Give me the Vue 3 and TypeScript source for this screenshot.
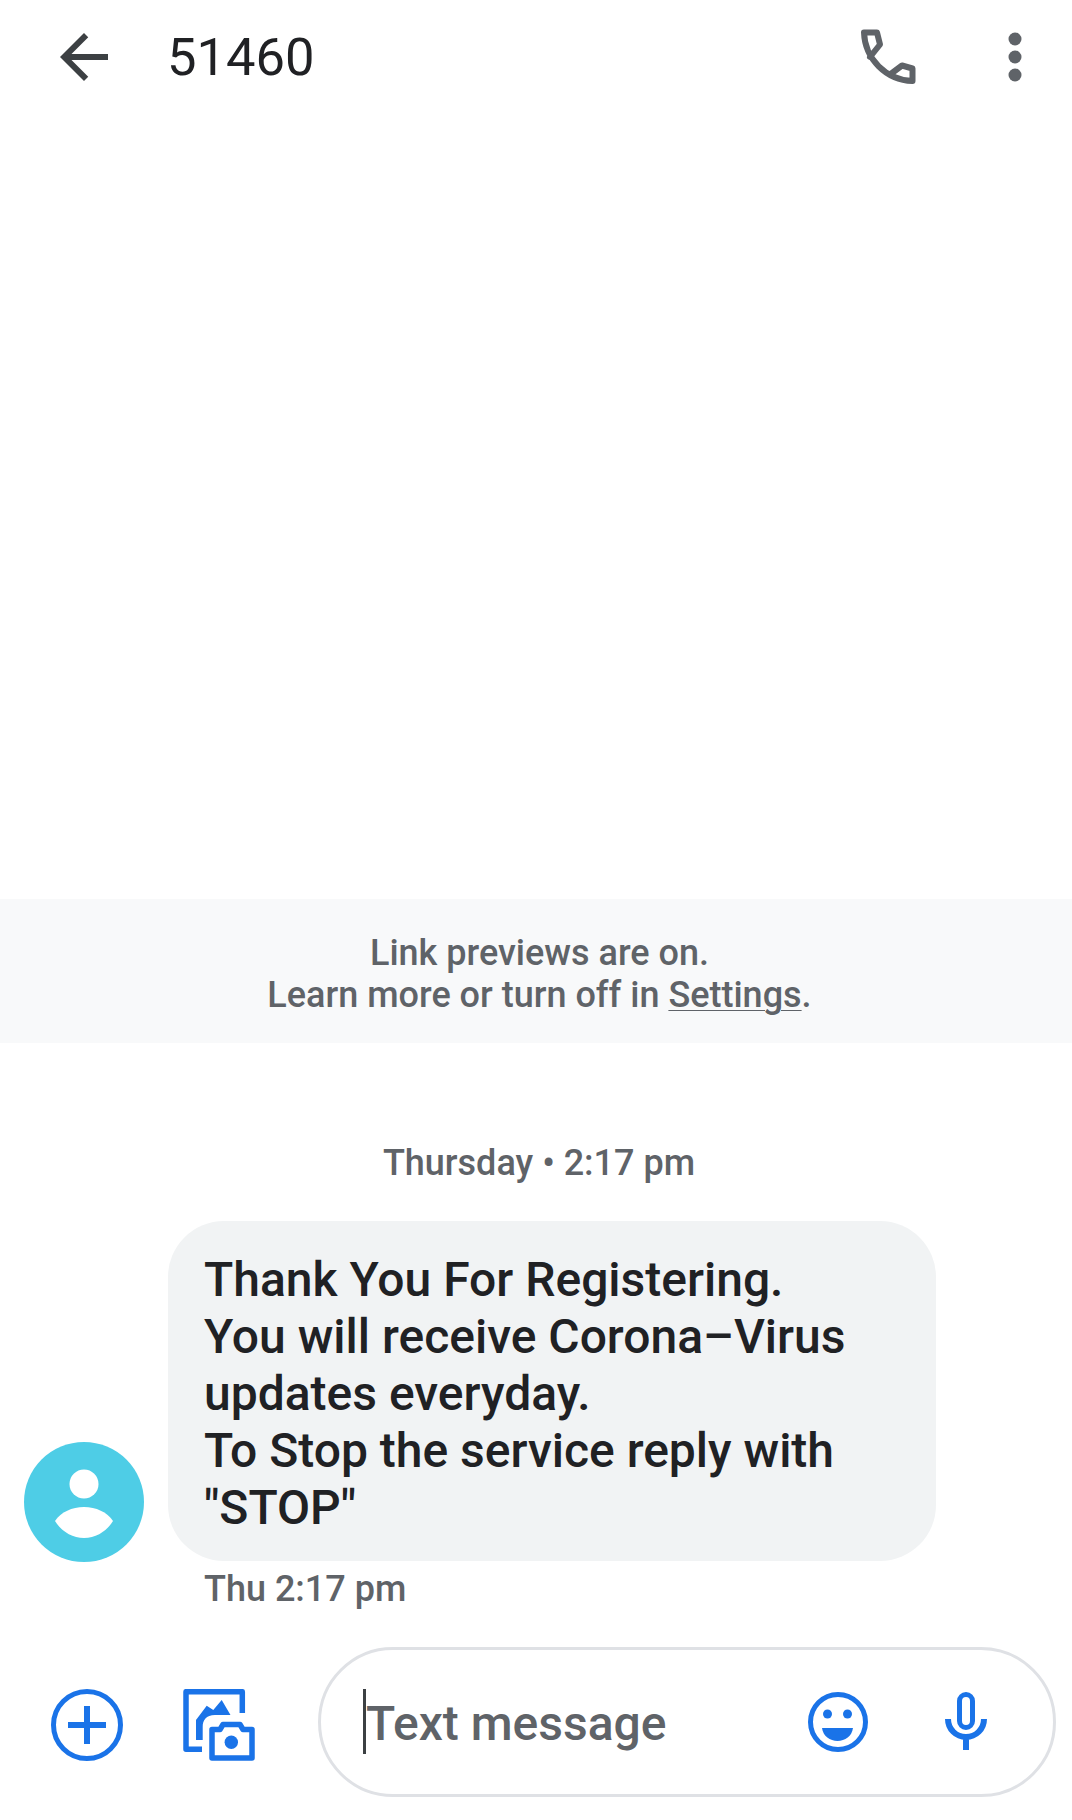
<template>
  <div class="screen">
    <header class="toolbar">
      <svg class="icon-back" width="72" height="72" viewBox="0 0 24 24">
        <path fill="#3c4043" d="M20 11H7.83l5.59-5.59L12 4l-8 8 8 8 1.41-1.41L7.83 13H20v-2z" />
      </svg>
      <h1 class="title">51460</h1>
      <svg class="icon-call" width="73" height="73" viewBox="11 6 73 73">
        <path
          fill="none"
          stroke="#5f6368"
          stroke-width="6"
          stroke-linejoin="round"
          stroke-linecap="round"
          d="M72.500 66C46 65 25 44 24 17.500H37L40 29.500L30 42M50 59.500L62 50.500L72.500 53.500V66"
        />
      </svg>
      <svg class="icon-more" width="72" height="72" viewBox="0 0 72 72">
        <circle cx="36" cy="18" r="6.5" fill="#5f6368" />
        <circle cx="36" cy="36" r="6.5" fill="#5f6368" />
        <circle cx="36" cy="54" r="6.5" fill="#5f6368" />
      </svg>
    </header>

    <section class="notice">
      <p>Link previews are on.</p>
      <p>Learn more or turn off in <span class="link">Settings</span>.</p>
    </section>

    <div class="day">Thursday • 2:17 pm</div>

    <div class="message">
      <svg class="avatar" width="120" height="120" viewBox="0 0 120 120">
        <circle cx="60" cy="60" r="60" fill="#4ecde6" />
        <circle cx="60" cy="42" r="14.5" fill="#fff" />
        <path fill="#fff" d="M31 79C37 70 48 65 60 65s23 5 29 14c-6 10-17 17-29 17s-23-7-29-17z" />
      </svg>
      <div class="bubble">
        <p v-for="line in lines" :key="line">{{ line }}</p>
      </div>
    </div>
    <div class="stamp">Thu 2:17 pm</div>

    <footer class="composer">
      <svg class="icon-add" width="72" height="72" viewBox="0 0 72 72">
        <circle cx="36" cy="36" r="33.5" fill="none" stroke="#1a73e8" stroke-width="5" />
        <path fill="none" stroke="#1a73e8" stroke-width="6" d="M17 36h38M36 17v38" />
      </svg>
      <svg class="icon-gallery" width="72" height="72" viewBox="13 14 72 72">
        <path
          fill="none"
          stroke="#1a73e8"
          stroke-width="5.5"
          stroke-linejoin="round"
          d="M72.300 38V16.700H16V74.300H32"
        />
        <path fill="#1a73e8" d="M26 65V45L36.700 30.700L43.300 35L51.700 25L60.500 40H45C36 40 32.700 45 32.700 52V65Z" />
        <path
          fill="none"
          stroke="#1a73e8"
          stroke-width="5.5"
          stroke-linejoin="round"
          d="M42 54.500H50L53 49.500H70L73 54.500H82V83H42Z"
        />
        <circle cx="61.300" cy="67.300" r="6.700" fill="#1a73e8" />
      </svg>
      <div class="field">
        <span class="caret"></span>
        <span class="placeholder">Text message</span>
        <svg class="icon-emoji" width="60" height="60" viewBox="0 0 60 60">
          <circle cx="30" cy="30" r="27.5" fill="none" stroke="#1a73e8" stroke-width="5" />
          <circle cx="19.5" cy="22" r="4.5" fill="#1a73e8" />
          <circle cx="39.5" cy="22" r="4.5" fill="#1a73e8" />
          <path fill="#1a73e8" d="M14 36h31c-1 8-8 13-15.500 13S15 44 14 36z" />
        </svg>
        <svg class="icon-mic" width="42" height="58" viewBox="0 0 42 58">
          <rect x="14.500" y="2.500" width="13" height="33" rx="6.500" fill="none" stroke="#1a73e8" stroke-width="5" />
          <path fill="none" stroke="#1a73e8" stroke-width="6" d="M3 27c0 10 8 18 18 18s18-8 18-18M21 44v14" />
        </svg>
      </div>
    </footer>
  </div>
</template>

<script setup lang="ts">
const lines: string[] = [
  'Thank You For Registering.',
  'You will receive Corona–Virus',
  'updates everyday.',
  'To Stop the service reply with',
  '"STOP"'
]
</script>

<style scoped>
.screen {
  display: flex;
  flex-direction: column;
  width: 1072px;
  height: 1820px;
  background: #fff;
  font-family: Roboto, "Liberation Sans", sans-serif;
  overflow: hidden;
}

p {
  margin: 0;
}

.toolbar {
  display: flex;
  align-items: center;
  height: 114px;
  padding: 0 22px 0 48px;
  box-sizing: border-box;
}

.toolbar svg {
  flex: none;
}

.title {
  margin: 0 0 0 47px;
  font-size: 52.5px;
  font-weight: 400;
  color: #202124;
}

.icon-call {
  margin-left: auto;
  margin-right: 54px;
}

.icon-more {
  position: relative;
  left: 1px;
}

.notice {
  margin-top: 785px;
  height: 144px;
  padding: 33px 0 0 7px;
  box-sizing: border-box;
  background: #f8f9fa;
  color: #5f6368;
  font-size: 36px;
  font-weight: 500;
  line-height: 42px;
  text-align: center;
}

.link {
  text-decoration: underline;
  text-decoration-thickness: 1px;
  text-underline-offset: 3px;
}

.day {
  margin-top: 99px;
  padding-left: 6px;
  color: #5f6368;
  font-size: 36px;
  font-weight: 500;
  line-height: 42px;
  text-align: center;
}

.message {
  display: flex;
  align-items: flex-end;
  gap: 24px;
  margin-top: 37px;
  padding-left: 24px;
}

.avatar {
  flex: none;
  margin-bottom: -1px;
}

.bubble {
  width: 768px;
  height: 340px;
  padding: 30px 36px;
  box-sizing: border-box;
  border-radius: 56px;
  background: #f1f3f4;
  color: #202124;
  font-size: 48px;
  font-weight: 500;
  line-height: 57px;
}

.stamp {
  margin-top: 7px;
  padding-left: 204px;
  color: #5f6368;
  font-size: 36px;
  font-weight: 500;
  line-height: 42px;
}

.composer {
  display: flex;
  align-items: center;
  margin-top: auto;
  margin-bottom: 23px;
  padding-left: 51px;
}

.composer > svg {
  flex: none;
  margin-top: 6px;
}

.icon-gallery {
  margin-left: 60px;
}

.field {
  position: relative;
  display: flex;
  align-items: center;
  width: 738px;
  height: 150px;
  margin-left: 63px;
  padding: 2px 0 0 45px;
  box-sizing: border-box;
  border: 3px solid #dfe1e5;
  border-radius: 75px;
}

.caret {
  position: absolute;
  left: 42px;
  top: 39px;
  width: 3px;
  height: 65px;
  background: #3c4043;
}

.placeholder {
  color: #5f6368;
  font-size: 48px;
  font-weight: 500;
}

.icon-emoji {
  position: absolute;
  left: 487px;
  top: 42px;
}

.icon-mic {
  position: absolute;
  left: 624px;
  top: 42px;
}
</style>

<style>
html,
body {
  background: #fff;
}
</style>
